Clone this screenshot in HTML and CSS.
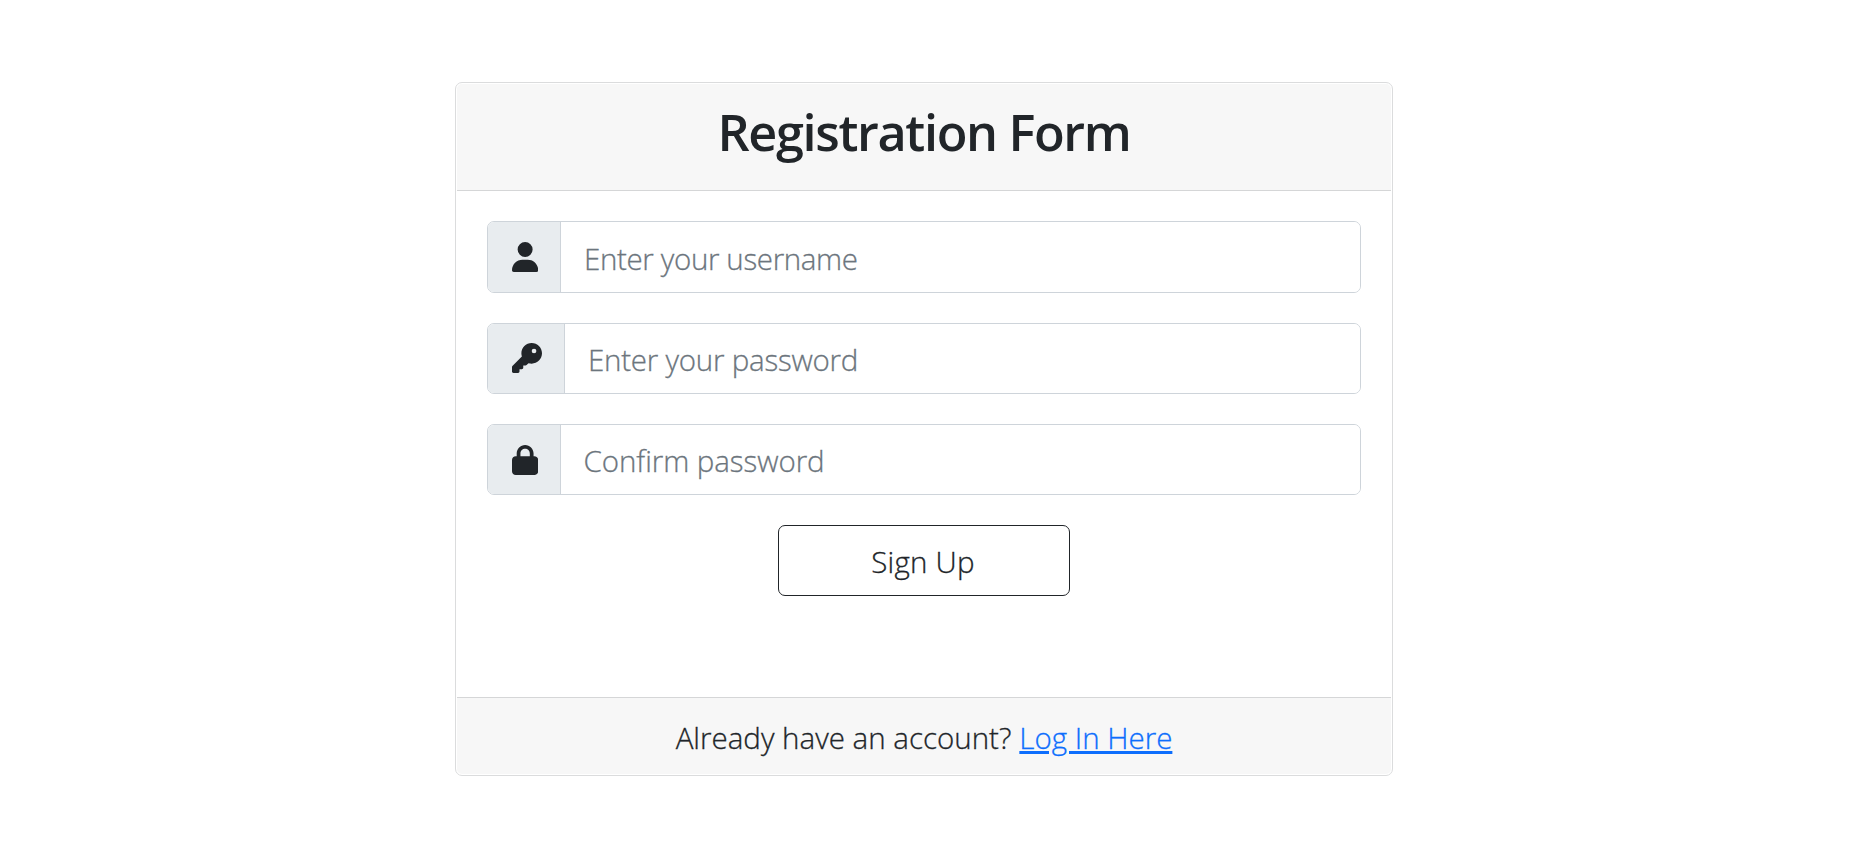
FILE: index.html
```html
<!DOCTYPE html>
<html lang="en">
<head>
<meta charset="utf-8">
<title>Registration Form</title>
<link rel="stylesheet" href="styles.css">
</head>
<body>
<main class="card">
  <header class="card-header"><h1 class="title">Registration Form</h1></header>
  <form class="card-body">
    <div class="input-group first">
      <span class="addon"><svg class="icon" viewBox="0 0 448 512"><path d="M224 256A128 128 0 1 0 224 0a128 128 0 1 0 0 256zm-45.700 48C79.800 304 0 383.800 0 482.300C0 498.700 13.300 512 29.700 512H418.300c16.400 0 29.700-13.300 29.700-29.700C448 383.800 368.200 304 269.700 304H178.300z"/></svg></span>
      <input class="field username" type="text" placeholder="Enter your username">
    </div>
    <div class="input-group">
      <span class="addon wide"><svg class="icon" viewBox="0 0 512 512"><path d="M336 352c97.200 0 176-78.800 176-176S433.200 0 336 0S160 78.800 160 176c0 18.700 2.900 36.800 8.300 53.700L7 391c-4.500 4.500-7 10.600-7 17v80c0 13.300 10.700 24 24 24h80c13.300 0 24-10.700 24-24V448h40c13.300 0 24-10.700 24-24V384h40c6.400 0 12.500-2.500 17-7l33.300-33.300c16.900 5.400 35 8.300 53.700 8.300zM376 96a40 40 0 1 1 0 80 40 40 0 1 1 0-80z"/></svg></span>
      <input class="field password" type="password" placeholder="Enter your password">
    </div>
    <div class="input-group">
      <span class="addon lock"><svg class="icon" viewBox="0 0 448 512"><path d="M144 144v48H304V144c0-44.200-35.800-80-80-80s-80 35.800-80 80zM80 192V144C80 64.500 144.500 0 224 0s144 64.500 144 144v48h16c35.300 0 64 28.700 64 64V448c0 35.300-28.700 64-64 64H64c-35.300 0-64-28.700-64-64V256c0-35.300 28.700-64 64-64H80z"/></svg></span>
      <input class="field confirm" type="password" placeholder="Confirm password">
    </div>
    <button class="submit" type="button">Sign Up</button>
  </form>
  <footer class="card-footer"><span class="prompt">Already have an account?</span><a class="login" href="#">Log In Here</a></footer>
</main>
</body>
</html>
```
FILE: styles.css
```css
* { box-sizing: border-box; }
body {
  margin: 0;
  padding-top: 82px;
  background: #fff;
  color: #212529;
  font-family: "Open Sans", "Noto Sans", sans-serif;
  font-size: 29.500px;
  font-weight: 300;
}
.card {
  display: flex;
  flex-direction: column;
  width: 938px;
  height: 694px;
  margin-left: 455px;
  padding: 1px;
  border: 1px solid #dbdcdd;
  border-radius: 7px;
}
.card-header {
  height: 107px;
  padding-top: 16px;
  background: #f7f7f7;
  border-bottom: 1px solid #d5d6d7;
  border-radius: 5px 5px 0 0;
  text-align: center;
}
.title {
  margin: 0;
  font-size: 50.400px;
  font-weight: 600;
  line-height: 64px;
  letter-spacing: -1.350px;
}
.card-body {
  display: flex;
  flex-direction: column;
  flex: 1;
  padding: 30px 30px 0;
}
.input-group {
  display: flex;
  height: 71px;
  margin-bottom: 30px;
  border: 1px solid #ced4da;
  border-radius: 7px;
  overflow: hidden;
}
.input-group.first { height: 72px; }
.addon {
  display: flex;
  align-items: center;
  justify-content: flex-start;
  width: 73px;
  padding: 0 0 0 24px;
  background: #e8ecef;
  border-right: 1px solid #ced4da;
}
.addon.wide { width: 77px; padding-bottom: 2px; }
.addon.lock { padding-top: 1px; }
.icon { height: 30px; fill: #212529; }
.field {
  flex: 1;
  min-width: 0;
  padding: 2px 23px 0;
  border: 0;
  outline: 0;
  background: #fff;
  font: inherit;
  -webkit-text-stroke: 0.300px #6c757d;
}
.username { letter-spacing: -0.360px; }
.password { letter-spacing: -0.240px; }
.confirm { padding-left: 22.500px; letter-spacing: -0.060px; }
.field::placeholder { color: #6c757d; opacity: 1; }
.submit {
  align-self: center;
  width: 292px;
  height: 71px;
  padding: 2px 2px 0 0;
  border: 1px solid #212529;
  border-radius: 7px;
  background: #fff;
  color: #212529;
  font: inherit;
  letter-spacing: 0.250px;
  -webkit-text-stroke: 0.300px #212529;
}
.card-footer {
  display: flex;
  justify-content: center;
  gap: 8px;
  height: 77px;
  padding-top: 19px;
  background: #f7f7f7;
  border-top: 1px solid #d5d6d7;
  border-radius: 0 0 5px 5px;
  line-height: 42px;
  -webkit-text-stroke: 0.300px currentColor;
}
.login {
  color: #0d6efd;
  text-decoration-thickness: 3px;
  text-underline-offset: 2px;
}
```
